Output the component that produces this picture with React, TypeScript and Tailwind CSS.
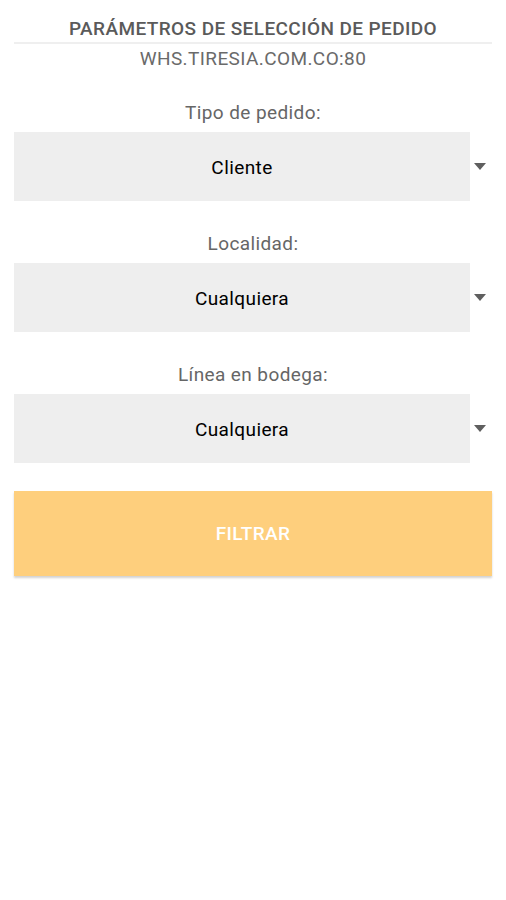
import React from "react";

function Arrow() {
  return (
    <svg width="12" height="7" viewBox="0 0 12 7" className="block">
      <path d="M0 0 L12 0 L6 7 Z" fill="#5f5f5f" />
    </svg>
  );
}

function Field({ label, value }: { label: string; value: string }) {
  return (
    <div className="flex flex-col">
      <div className="mt-[31px] mb-[7px] h-6 text-center text-[19px] leading-6 tracking-[0.4px] text-[#666666]">{label}</div>
      <div className="flex h-[69px] items-center">
        <div className="flex h-full w-[456px] items-center justify-center bg-[#eeeeee] pt-[3px] text-[19px] tracking-[0.4px] text-black">
          {value}
        </div>
        <div className="flex flex-1 items-center justify-center pr-[2px]">
          <Arrow />
        </div>
      </div>
    </div>
  );
}

export default function App() {
  return (
    <div
      className="min-h-[900px] bg-white px-[14px]"
      style={{ fontFamily: "Roboto, 'Noto Sans', sans-serif" }}
    >
      <div className="pt-[17px] text-center text-[19px] font-medium leading-6 tracking-[0.4px] text-[#5a5a5a]">
        PARÁMETROS DE SELECCIÓN DE PEDIDO
      </div>
      <div className="mt-[1px] h-[2px] bg-[#efefef]" />
      <div className="mt-[3px] text-center text-[19px] leading-6 tracking-[0.4px] text-[#6a6a6a]">WHS.TIRESIA.COM.CO:80</div>
      <div className="-mt-px">
        <Field label="Tipo de pedido:" value="Cliente" />
        <Field label="Localidad:" value="Cualquiera" />
        <Field label="Línea en bodega:" value="Cualquiera" />
      </div>
      <button className="mt-[28px] flex h-[85px] w-full items-center justify-center bg-[#fecf7d] pt-[2px] text-[19px] font-medium tracking-[0.4px] text-white shadow-[0_2px_2px_rgba(0,0,0,0.18)]">
        FILTRAR
      </button>
    </div>
  );
}
